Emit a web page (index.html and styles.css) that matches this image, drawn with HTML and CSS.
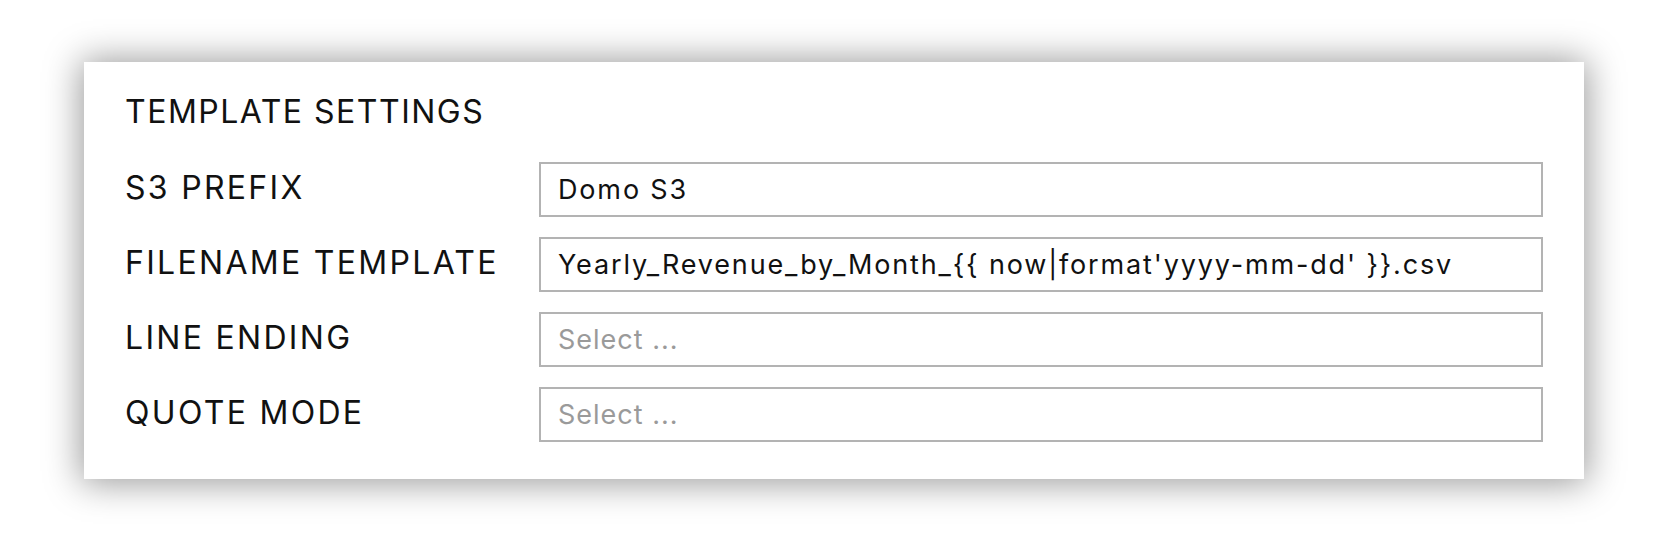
FILE: index.html
```html
<!DOCTYPE html>
<html>
<head>
<meta charset="utf-8">
<link rel="stylesheet" href="styles.css">
</head>
<body>
<div class="card">
  <div class="title">TEMPLATE SETTINGS</div>
  <div class="form">
    <div class="label">S3 PREFIX</div>
    <div class="field">Domo S3</div>
    <div class="label">FILENAME TEMPLATE</div>
    <div class="field">Yearly_Revenue_by_Month_{{ now|format'yyyy-mm-dd' }}.csv</div>
    <div class="label">LINE ENDING</div>
    <div class="field placeholder">Select ...</div>
    <div class="label">QUOTE MODE</div>
    <div class="field placeholder">Select ...</div>
  </div>
</div>
</body>
</html>
```
FILE: styles.css
```css
html, body {
  margin: 0;
  padding: 0;
  background: #ffffff;
}
body {
  font-family: "Inter", "DejaVu Sans", sans-serif;
  color: #111111;
  padding: 62px 0 63px 84px;
  min-height: 542px;
  box-sizing: border-box;
}
.card {
  width: 1500px;
  height: 417px;
  box-sizing: border-box;
  background: #ffffff;
  box-shadow: 0 1px 34px 3px rgba(0, 0, 0, 0.4);
  padding: 30px 41px 0 41px;
}
.title {
  font-size: 32px;
  line-height: 40px;
  height: 40px;
  margin-bottom: 30px;
  letter-spacing: 1.5px;
}
.form {
  display: grid;
  grid-template-columns: 414px 1004px;
  grid-auto-rows: 55px;
  row-gap: 20px;
  align-items: center;
}
.label {
  font-size: 32px;
  line-height: 40px;
  letter-spacing: 2.3px;
  padding-bottom: 4px;
}
.field {
  height: 55px;
  box-sizing: border-box;
  border: 2px solid #b3b3b3;
  padding: 0 17px;
  display: flex;
  align-items: center;
  font-size: 27px;
  letter-spacing: 1.85px;
  color: #111111;
  white-space: nowrap;
}
.placeholder {
  color: #9a9a9a;
  letter-spacing: 1px;
}
```
